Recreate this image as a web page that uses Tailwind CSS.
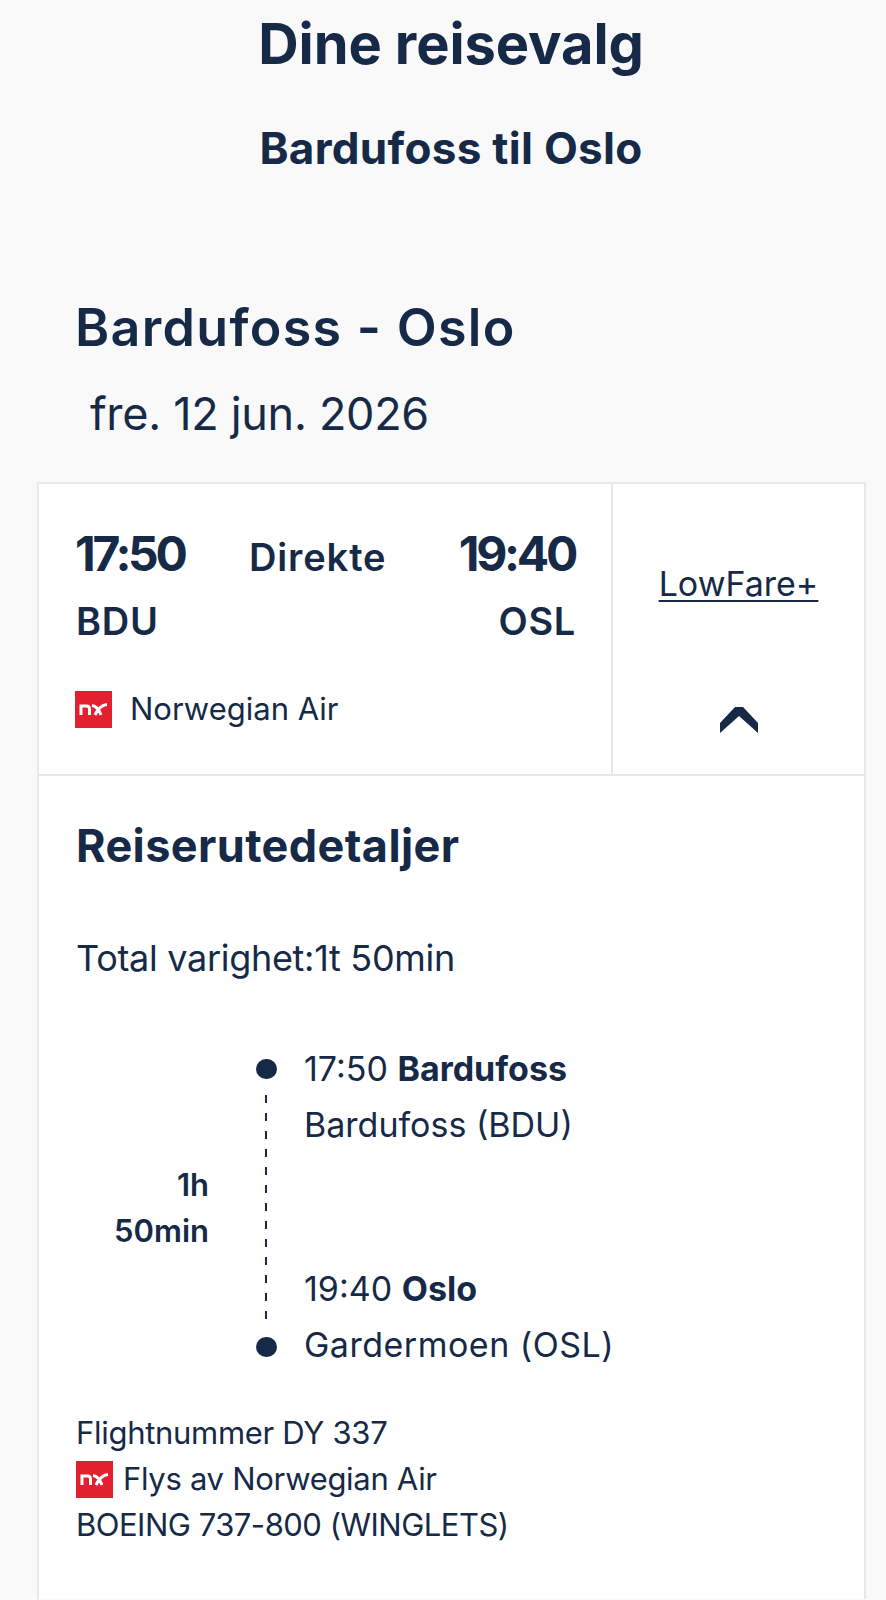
<!DOCTYPE html>
<html lang="en">
<head>
  <meta charset="UTF-8">
  <title>Dine reisevalg</title>
  <script src="https://cdn.jsdelivr.net/npm/@tailwindcss/browser@4"></script>
</head>
<body class="bg-[#f9f9fa] font-['Inter',sans-serif] text-[#162a47] h-[1600px] overflow-hidden">

  <!-- Heading -->
  <div class="pl-4 text-center">
    <h1 class="text-[56px] leading-[88px] font-bold tracking-[-0.1px]">Dine reisevalg</h1>
    <h2 class="mt-[32px] text-[44px] leading-[56px] font-bold tracking-[0.3px]">Bardufoss til Oslo</h2>
  </div>

  <!-- Route title -->
  <div class="pl-[75px] mt-[122px]">
    <h3 class="text-[52px] leading-[60px] font-semibold tracking-[1.3px]">Bardufoss - Oslo</h3>
    <p class="mt-[28px] pl-[15px] text-[45px] leading-[56px] tracking-[-0.3px]">fre. 12 jun. 2026</p>
  </div>

  <!-- Card -->
  <div class="ml-[37px] mr-[20px] mt-[40px] h-[1117px] bg-white border-2 border-b-0 border-[#e8e8e8]">
    <div class="flex h-[292px] border-b-2 border-[#e8e8e8]">
      <div class="w-[574px] shrink-0 pl-[36px] pr-[36px] pt-[40px] border-r-2 border-[#e8e8e8]">
        <div class="flex items-baseline justify-between">
          <span class="text-[48px] leading-[60px] font-bold tracking-[-3.3px]">17:50</span>
          <span class="mr-[8px] text-[38px] font-semibold tracking-[0.9px]">Direkte</span>
          <span class="text-[48px] leading-[60px] font-bold tracking-[-3.3px]">19:40</span>
        </div>
        <div class="flex justify-between mt-[8px] text-[38px] leading-[54px] font-semibold tracking-[0.7px]">
          <span class="pl-[1px]">BDU</span>
          <span class="-mr-[1px]">OSL</span>
        </div>
        <div class="flex items-center gap-[18px] mt-[42px] text-[31px] leading-[38px]">
          <svg class="w-[37px] h-[37px]" viewBox="0 0 37 37">
            <rect width="37" height="37" fill="#e3202f"/>
            <path d="M6 24V15h5.500q3 0 3 3v6M17 14.500c4 .5 7 4 9 9.500M32 13.500c-5 .5-9 4-12 10.500" fill="none" stroke="#fff" stroke-width="3"/>
          </svg>
          <span>Norwegian Air</span>
        </div>
      </div>
      <div class="flex-1 flex flex-col items-center pt-[76px]">
        <a class="text-[34px] leading-[48px] underline underline-offset-[4px] decoration-2">LowFare+</a>
        <svg class="w-[38px] h-[26px] mt-[99px]" viewBox="0 0 38 26">
          <path d="M0 26V16L15 0h8l15 16v10L19 9z" fill="#162a47"/>
        </svg>
      </div>
    </div>

    <!-- Details -->
    <div class="pl-[37px]">
      <h4 class="mt-[38px] text-[45px] leading-[64px] font-bold tracking-[0.4px]">Reiserutedetaljer</h4>
      <p class="mt-[56px] text-[36px] leading-[48px] tracking-[-0.3px]">Total varighet:1t 50min</p>

      <div class="relative mt-[59px] h-[338px]">
        <div class="absolute left-[180px] top-[18px] w-[21px] h-[20px] rounded-full bg-[#162a47]"></div>
        <div class="absolute left-[189px] top-[54px] w-[2px] h-[232px] bg-[repeating-linear-gradient(to_bottom,#162a47_0_8px,transparent_8px_18px)]"></div>
        <div class="absolute left-[180px] top-[296px] w-[21px] h-[20px] rounded-full bg-[#162a47]"></div>
        <div class="absolute left-0 top-[121px] w-[133px] text-right text-[31px] leading-[46px] font-semibold">1h<br>50min</div>
        <div class="ml-[228px] text-[34px] leading-[56px]">
          <p>17:50 <b class="font-bold">Bardufoss</b></p>
          <p>Bardufoss (BDU)</p>
          <p class="mt-[108px]">19:40 <b class="font-bold">Oslo</b></p>
          <p class="tracking-[0.5px]">Gardermoen (OSL)</p>
        </div>
      </div>

      <div class="mt-[31px] text-[31px] leading-[46px] tracking-[-0.3px]">
        <p>Flightnummer DY 337</p>
        <p class="flex items-center gap-[10px]">
          <svg class="w-[37px] h-[37px]" viewBox="0 0 37 37">
            <rect width="37" height="37" fill="#e3202f"/>
            <path d="M6 24V15h5.500q3 0 3 3v6M17 14.500c4 .5 7 4 9 9.500M32 13.500c-5 .5-9 4-12 10.500" fill="none" stroke="#fff" stroke-width="3"/>
          </svg>
          <span>Flys av Norwegian Air</span>
        </p>
        <p class="tracking-[-0.5px]">BOEING 737-800 (WINGLETS)</p>
      </div>
    </div>
  </div>

</body>
</html>
